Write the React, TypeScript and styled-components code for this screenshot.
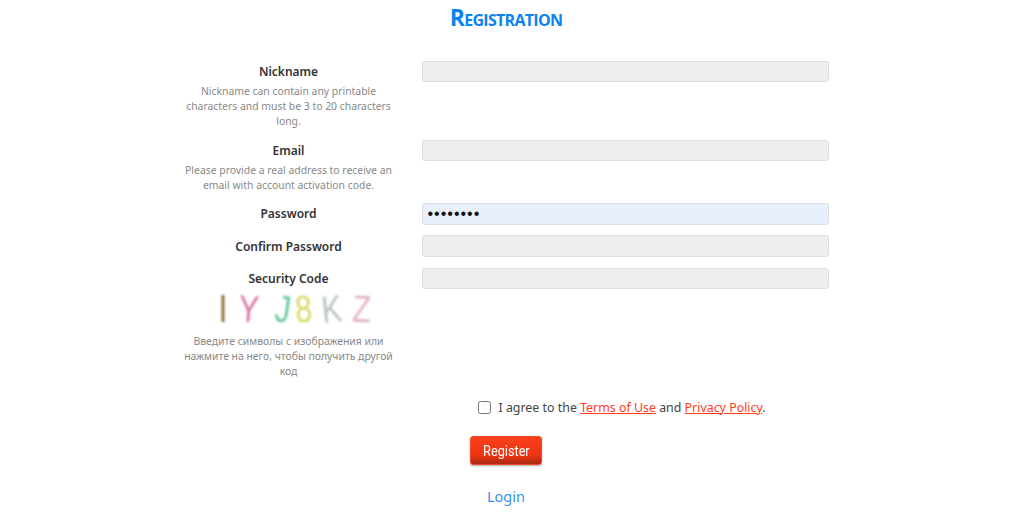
import styled, { createGlobalStyle } from 'styled-components';

const GlobalStyle = createGlobalStyle`
  html, body {
    margin: 0;
    padding: 0;
    background: #fff;
  }

  body {
    font-family: 'Noto Sans', 'Liberation Sans', sans-serif;
    color: #333;
    overflow: hidden;
  }
`;

const Page = styled.div`
  width: 1012px;
  height: 515px;
  display: flex;
  flex-direction: column;
  align-items: center;
`;

const Title = styled.h1`
  margin: 0;
  height: 61px;
  padding-top: 2px;
  box-sizing: border-box;
  font-family: 'Open Sans', 'Liberation Sans', sans-serif;
  font-size: 23px;
  line-height: 30px;
  font-weight: 700;
  font-variant: small-caps;
  letter-spacing: -0.7px;
  color: #0a84f0;
`;

const Form = styled.form`
  width: 645px;
  display: flex;
  flex-direction: column;
`;

const Row = styled.div<{ $height: number }>`
  display: grid;
  grid-template-columns: 210px 407px;
  column-gap: 28px;
  align-items: start;
  height: ${(p) => p.$height}px;
`;

const LabelCell = styled.div<{ $top?: number }>`
  display: flex;
  flex-direction: column;
  align-items: center;
  text-align: center;
  padding-top: ${(p) => p.$top ?? 1}px;
`;

const Label = styled.label`
  font-size: 12px;
  line-height: 20px;
  font-weight: 600;
  color: #333;
`;

const Hint = styled.p`
  margin: 2px 0 0;
  font-size: 10.4px;
  line-height: 15px;
  color: #888;
`;

const Input = styled.input<{ $filled?: boolean; $tall?: boolean }>`
  display: block;
  width: 100%;
  height: ${(p) => (p.$tall ? 22 : 21)}px;
  box-sizing: border-box;
  padding: 0 5px;
  border: 1px solid #ddd;
  border-radius: 3px;
  outline: none;
  background: ${(p) => (p.$filled ? '#e8f0fe' : '#eee')};
  font-size: 16px;
  letter-spacing: 1px;
  color: #111;
`;

const Captcha = styled.div`
  width: 168px;
  height: 43px;
  display: flex;
  align-items: flex-start;
  filter: blur(0.8px);
`;

const CaptchaChar = styled.span<{ $color: string; $turn: number; $left: number }>`
  flex: none;
  min-width: 20px;
  margin-left: ${(p) => p.$left}px;
  margin-right: -6px;
  font-family: 'Liberation Sans', sans-serif;
  font-size: 38px;
  line-height: 40px;
  text-align: center;
  color: ${(p) => p.$color};
  transform: rotate(${(p) => p.$turn}deg) scaleX(0.8);
`;

const Agree = styled.div`
  display: flex;
  align-items: center;
  gap: 8px;
  margin: 11px 0 0 294px;
  height: 20px;
  font-size: 12.4px;
  color: #444;
`;

const Check = styled.input`
  width: 13px;
  height: 13px;
  margin: 0;
`;

const RedLink = styled.a`
  color: #ff3b1f;
  text-decoration: underline;
`;

const Actions = styled.div`
  display: flex;
  flex-direction: column;
  align-items: center;
  gap: 21px;
  margin-top: 19px;
`;

const RegisterButton = styled.button`
  width: 72px;
  height: 29px;
  padding: 0;
  border: 1px solid #f04a2a;
  border-radius: 3px;
  background: linear-gradient(#f8401a 0%, #ee3413 68%, #a82812 100%);
  box-shadow: 0 1px 2px rgba(0, 0, 0, 0.35);
  color: #fff;
`;

const RegisterText = styled.span`
  display: inline-block;
  font-family: 'Roboto', sans-serif;
  font-size: 15.5px;
  transform: scaleX(0.82);
`;

const LoginLink = styled.a`
  font-size: 14.5px;
  line-height: 20px;
  color: #3d93ea;
  text-decoration: none;
`;

const captchaChars = [
  { ch: 'I', color: '#8a6c2c', turn: 0, left: 8 },
  { ch: 'Y', color: '#dc74a6', turn: 4, left: 9 },
  { ch: 'J', color: '#66c99a', turn: 8, left: 18 },
  { ch: '8', color: '#d9d968', turn: -4, left: 6 },
  { ch: 'K', color: '#b9c2c2', turn: -6, left: 11 },
  { ch: 'Z', color: '#e2b4c4', turn: 3, left: 12 },
];

export default function App() {
  return (
    <>
      <GlobalStyle />
      <Page>
        <Title>Registration</Title>
        <Form onSubmit={(e) => e.preventDefault()}>
          <Row $height={79}>
            <LabelCell>
              <Label>Nickname</Label>
              <Hint>Nickname can contain any printable characters and must be 3 to 20 characters long.</Hint>
            </LabelCell>
            <Input type="text" />
          </Row>
          <Row $height={63}>
            <LabelCell>
              <Label>Email</Label>
              <Hint>Please provide a real address to receive an email with account activation code.</Hint>
            </LabelCell>
            <Input type="text" />
          </Row>
          <Row $height={32}>
            <LabelCell>
              <Label>Password</Label>
            </LabelCell>
            <Input type="password" defaultValue="password" $filled $tall />
          </Row>
          <Row $height={33}>
            <LabelCell $top={2}>
              <Label>Confirm Password</Label>
            </LabelCell>
            <Input type="password" $tall />
          </Row>
          <Row $height={118}>
            <LabelCell>
              <Label>Security Code</Label>
              <Captcha>
                {captchaChars.map((c) => (
                  <CaptchaChar key={c.ch} $color={c.color} $turn={c.turn} $left={c.left}>
                    {c.ch}
                  </CaptchaChar>
                ))}
              </Captcha>
              <Hint>Введите символы с изображения или нажмите на него, чтобы получить другой код</Hint>
            </LabelCell>
            <Input type="text" />
          </Row>
          <Agree>
            <Check type="checkbox" />
            <span>
              I agree to the <RedLink href="#">Terms of Use</RedLink> and <RedLink href="#">Privacy Policy</RedLink>.
            </span>
          </Agree>
        </Form>
        <Actions>
          <RegisterButton type="button">
            <RegisterText>Register</RegisterText>
          </RegisterButton>
          <LoginLink href="#">Login</LoginLink>
        </Actions>
      </Page>
    </>
  );
}
